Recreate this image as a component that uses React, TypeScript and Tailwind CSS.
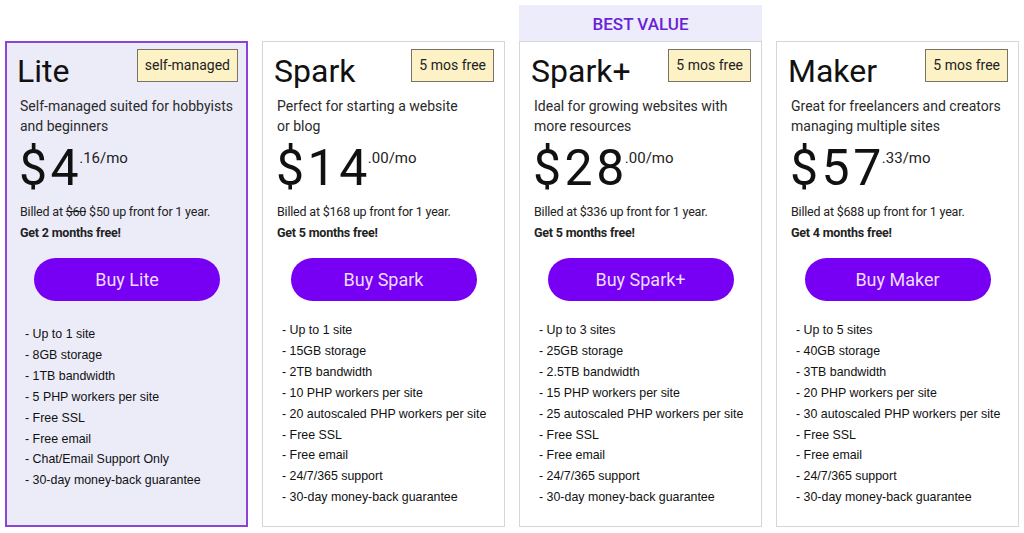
import React from 'react'

interface Plan {
  name: string
  badge: string
  desc: string[]
  dollars: string
  cents: string
  billed: React.ReactNode
  free: string
  button: string
  features: string[]
  highlight?: boolean
  banner?: string
}

const plans: Plan[] = [
  {
    name: 'Lite',
    badge: 'self-managed',
    desc: ['Self-managed suited for hobbyists', 'and beginners'],
    dollars: '$4',
    cents: '.16/mo',
    billed: (
      <>
        Billed at <span className="line-through">$60</span> $50 up front for 1 year.
      </>
    ),
    free: 'Get 2 months free!',
    button: 'Buy Lite',
    features: [
      'Up to 1 site',
      '8GB storage',
      '1TB bandwidth',
      '5 PHP workers per site',
      'Free SSL',
      'Free email',
      'Chat/Email Support Only',
      '30-day money-back guarantee',
    ],
    highlight: true,
  },
  {
    name: 'Spark',
    badge: '5 mos free',
    desc: ['Perfect for starting a website', 'or blog'],
    dollars: '$14',
    cents: '.00/mo',
    billed: 'Billed at $168 up front for 1 year.',
    free: 'Get 5 months free!',
    button: 'Buy Spark',
    features: [
      'Up to 1 site',
      '15GB storage',
      '2TB bandwidth',
      '10 PHP workers per site',
      '20 autoscaled PHP workers per site',
      'Free SSL',
      'Free email',
      '24/7/365 support',
      '30-day money-back guarantee',
    ],
  },
  {
    name: 'Spark+',
    badge: '5 mos free',
    desc: ['Ideal for growing websites with', 'more resources'],
    dollars: '$28',
    cents: '.00/mo',
    billed: 'Billed at $336 up front for 1 year.',
    free: 'Get 5 months free!',
    button: 'Buy Spark+',
    features: [
      'Up to 3 sites',
      '25GB storage',
      '2.5TB bandwidth',
      '15 PHP workers per site',
      '25 autoscaled PHP workers per site',
      'Free SSL',
      'Free email',
      '24/7/365 support',
      '30-day money-back guarantee',
    ],
    banner: 'BEST VALUE',
  },
  {
    name: 'Maker',
    badge: '5 mos free',
    desc: ['Great for freelancers and creators', 'managing multiple sites'],
    dollars: '$57',
    cents: '.33/mo',
    billed: 'Billed at $688 up front for 1 year.',
    free: 'Get 4 months free!',
    button: 'Buy Maker',
    features: [
      'Up to 5 sites',
      '40GB storage',
      '3TB bandwidth',
      '20 PHP workers per site',
      '30 autoscaled PHP workers per site',
      'Free SSL',
      'Free email',
      '24/7/365 support',
      '30-day money-back guarantee',
    ],
  },
]

function PlanCard({ plan }: { plan: Plan }) {
  return (
    <div className="flex flex-col">
      <div className="h-[36px]">
        {plan.banner && (
          <div className="w-full h-full pt-[3px] flex items-center justify-center bg-[#ececfa] text-[#6a1fd8] text-[17px] font-medium">
            {plan.banner}
          </div>
        )}
      </div>
      <div
        className={
          plan.highlight
            ? 'h-[486px] border-2 border-[#8b45d6] bg-[#ececf9] pl-[12px] pr-[8px]'
            : 'h-[486px] border border-[#d6d6d6] bg-white pl-[13px] pr-[10px]'
        }
      >
        <div className={plan.highlight ? 'flex justify-between items-start pt-[6px]' : 'flex justify-between items-start pt-[7px]'}>
          <div className="mt-[3px] -ml-[2px] text-[32px] leading-[38px] text-[#111]">{plan.name}</div>
          <div className="h-[33px] px-[7px] flex items-center border border-[#7a7263] bg-[#fdf1c6] text-[14px] text-[#222]">
            {plan.badge}
          </div>
        </div>
        <div className="mt-[6px] pl-[1px] text-[14px] leading-[20px] text-[#2a2a2a] whitespace-nowrap">
          {plan.desc.map((d) => (
            <div key={d}>{d}</div>
          ))}
        </div>
        <div className="mt-[4px] flex items-start">
          <div className="text-[50px] leading-[56px] tracking-[3.5px] text-[#111]">{plan.dollars}</div>
          <div className="mt-[10px] -ml-[3px] text-[15px] leading-[16px] text-[#222]">{plan.cents}</div>
        </div>
        <div className="mt-[5px] pl-[1px] text-[12.5px] leading-[21px] text-[#222] tracking-[-0.2px] whitespace-nowrap">
          <div>{plan.billed}</div>
          <div className="font-bold">{plan.free}</div>
        </div>
        <div className="mt-[15px] flex justify-center pr-[3px]">
          <button className="w-[186px] h-[43px] rounded-full bg-[#7700f4] text-[18px] text-[#ecdcff]">
            {plan.button}
          </button>
        </div>
        <ul
          className={
            plan.highlight
              ? 'mt-[23px] pl-[6px] font-["Liberation_Sans",Arial,sans-serif] text-[12.4px] leading-[20.9px] text-[#111] whitespace-nowrap'
              : 'mt-[19px] pl-[6px] font-["Liberation_Sans",Arial,sans-serif] text-[12.4px] leading-[20.9px] text-[#111] whitespace-nowrap'
          }
        >
          {plan.features.map((f) => (
            <li key={f}>- {f}</li>
          ))}
        </ul>
      </div>
    </div>
  )
}

export default function App() {
  return (
    <div className="w-[1024px] h-[533px] bg-white px-[5px] pt-[5px] font-['Roboto',sans-serif] overflow-hidden">
      <div className="grid grid-cols-4 gap-[14px]">
        {plans.map((p) => (
          <PlanCard key={p.name} plan={p} />
        ))}
      </div>
    </div>
  )
}
